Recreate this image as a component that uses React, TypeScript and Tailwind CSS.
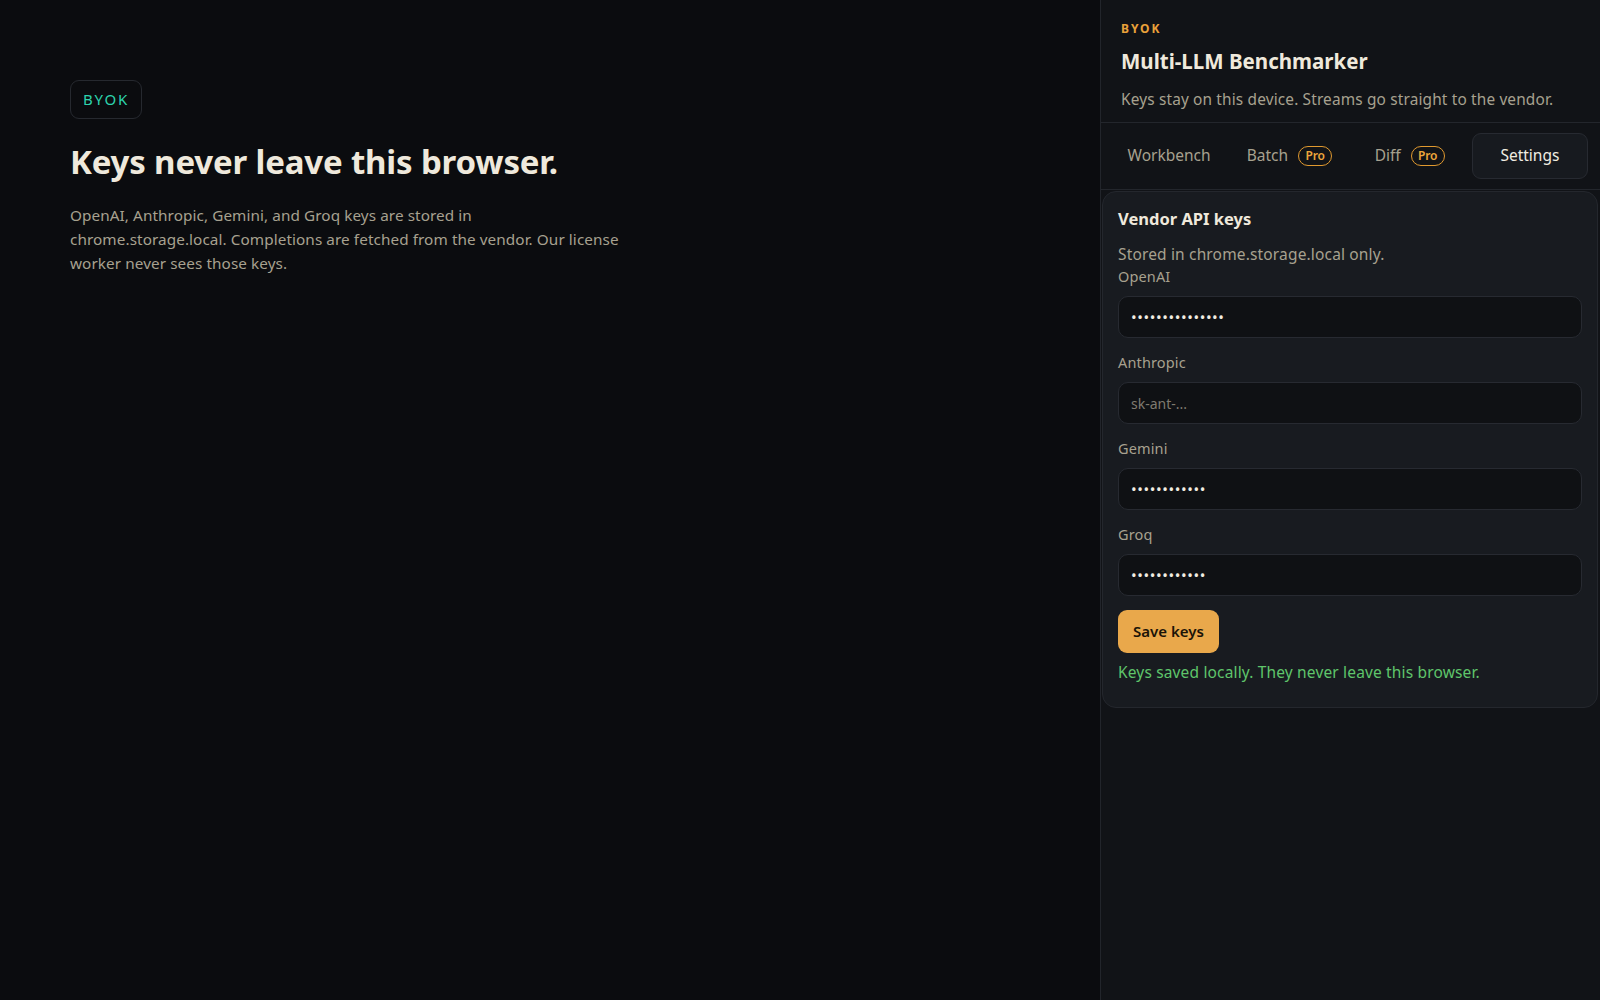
import React from "react";

const fields: { label: string; value: string; placeholder: string }[] = [
  { label: "OpenAI", value: "sk-proj-abcdefg", placeholder: "sk-..." },
  { label: "Anthropic", value: "", placeholder: "sk-ant-..." },
  { label: "Gemini", value: "AIzaSyabcdef", placeholder: "AIza..." },
  { label: "Groq", value: "gsk_abcdefgh", placeholder: "gsk_..." },
];

function ProBadge() {
  return (
    <span className="inline-flex h-[20px] w-[34px] items-center justify-center rounded-full border-[1.5px] border-[#e0992f] pb-[1px] text-[12px] font-semibold leading-none tracking-[-0.02em] text-[#eda63c]">
      Pro
    </span>
  );
}

export default function App() {
  return (
    <div className="flex h-[1000px] w-full overflow-hidden bg-[#0b0c0f] font-['Noto_Sans',sans-serif]">
      <main className="flex-1 px-[70px] pt-[80px]">
        <span className="inline-flex h-[39px] items-center rounded-[9px] border border-[#26292f] px-[12px] text-[15px] tracking-[0.12em] text-[#2dd3ad]">
          BYOK
        </span>
        <h1 className="mt-[22px] text-[33px] font-bold leading-[41px] tracking-[-0.005em] text-[#efe9dc]">
          Keys never leave this browser.
        </h1>
        <p className="mt-[21px] max-w-[620px] text-[15.3px] leading-[24px] tracking-[0.005em] text-[#a7a18f]">
          OpenAI, Anthropic, Gemini, and Groq keys are stored in
          <br />
          chrome.storage.local. Completions are fetched from the vendor. Our license
          <br />
          worker never sees those keys.
        </p>
      </main>

      <aside className="flex w-[500px] flex-col border-l border-[#22252b] bg-[#111317]">
        <header className="border-b border-[#23262c] px-[20px] pb-[11px] pt-[21px]">
          <div className="text-[12px] font-bold leading-[16px] tracking-[0.16em] text-[#e9a13a]">BYOK</div>
          <h2 className="mt-[10px] text-[20.5px] font-bold leading-[28px] text-[#efe9dc]">Multi-LLM Benchmarker</h2>
          <p className="mt-[14px] text-[15.4px] leading-[22px] tracking-[0.01em] text-[#a7a18f]">
            Keys stay on this device. Streams go straight to the vendor.
          </p>
        </header>

        <nav className="grid grid-cols-4 gap-[4px] border-b border-[#23262c] pl-[10px] pr-[12px] py-[10px]">
          <button className="flex h-[46px] items-center justify-center text-[15.5px] text-[#a7a18f]">Workbench</button>
          <button className="flex h-[46px] items-center justify-center gap-[10px] text-[15.5px] text-[#a7a18f]">
            Batch <ProBadge />
          </button>
          <button className="flex h-[46px] items-center justify-center gap-[10px] text-[15.5px] text-[#a7a18f]">
            Diff <ProBadge />
          </button>
          <button className="flex h-[46px] items-center justify-center rounded-[9px] border border-[#272a31] bg-[#171a1f] text-[15.5px] text-[#f1ede2]">
            Settings
          </button>
        </nav>

        <section className="ml-[1px] mr-[2px] mt-[1px] rounded-[14px] border border-[#24272d] bg-[#181b20] px-[15px] pb-[24px] pt-[16px]">
          <h3 className="text-[16.5px] font-bold leading-[22px] text-[#efe9dc]">Vendor API keys</h3>
          <p className="mt-[13px] text-[15.5px] leading-[22px] tracking-[0.01em] text-[#a7a18f]">
            Stored in chrome.storage.local only.
          </p>
          <div className="mt-[1px] flex flex-col gap-[14px]">
            {fields.map((f) => (
              <label key={f.label} className="flex flex-col">
                <span className="text-[14.5px] leading-[20px] tracking-[0.01em] text-[#a7a18f]">{f.label}</span>
                <input
                  type="password"
                  readOnly
                  value={f.value}
                  placeholder={f.placeholder}
                  className="mt-[10px] h-[42px] w-full rounded-[10px] border border-[#272a31] bg-[#0f1114] px-[12px] text-[15px] tracking-[0.04em] text-[#f1ede2] outline-none placeholder:text-[14px] placeholder:tracking-normal placeholder:text-[#7f7b70]"
                />
              </label>
            ))}
          </div>
          <button className="mt-[14px] h-[43px] rounded-[9px] bg-[#e9a84b] px-[15px] text-[15px] font-semibold text-[#1b1408]">
            Save keys
          </button>
          <p className="mt-[8px] text-[15.5px] leading-[22px] tracking-[0.01em] text-[#5fc56b]">
            Keys saved locally. They never leave this browser.
          </p>
        </section>
      </aside>
    </div>
  );
}
